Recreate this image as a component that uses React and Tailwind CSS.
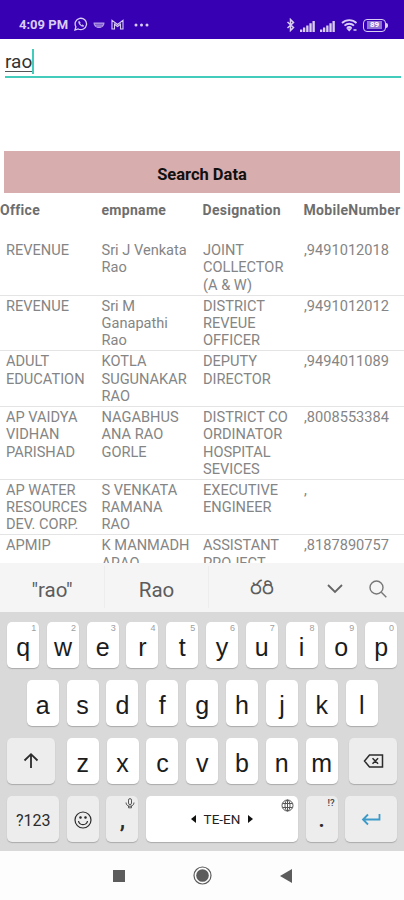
const columns = ['Office', 'empname', 'Designation', 'MobileNumber']

const records = [
  { office: 'REVENUE', name: 'Sri J Venkata\nRao', post: 'JOINT\nCOLLECTOR\n(A & W)', mobile: ',9491012018' },
  { office: 'REVENUE', name: 'Sri M\nGanapathi\nRao', post: 'DISTRICT\nREVEUE\nOFFICER', mobile: ',9491012012' },
  { office: 'ADULT\nEDUCATION', name: 'KOTLA\nSUGUNAKAR\nRAO', post: 'DEPUTY\nDIRECTOR', mobile: ',9494011089' },
  { office: 'AP VAIDYA\nVIDHAN\nPARISHAD', name: 'NAGABHUS\nANA RAO\nGORLE', post: 'DISTRICT CO\nORDINATOR\nHOSPITAL\nSEVICES', mobile: ',8008553384' },
  { office: 'AP WATER\nRESOURCES\nDEV. CORP.', name: 'S VENKATA\nRAMANA\nRAO', post: 'EXECUTIVE\nENGINEER', mobile: ',' },
  { office: 'APMIP', name: 'K MANMADH\nARAO', post: 'ASSISTANT\nPROJECT', mobile: ',8187890757' },
]

function StatusBar() {
  return (
    <header className="flex h-[38.5px] shrink-0 items-end bg-[#3700b3] pr-[16px] pb-[6px] pl-[19px] text-[#d9cdf4]">
      <span className="text-[13px] leading-[17px] font-bold">4:09 PM</span>
      <svg className="mb-[1.5px] ml-[6px]" width="14" height="14" viewBox="0 0 14 14" fill="none" stroke="currentColor">
        <path d="M1 13l.9-3.2A5.7 5.7 0 1 1 4.2 12z" strokeWidth="1.3" />
        <path d="M5 4.2c-.8 1 .2 2.8 1.2 3.8s2.8 1.8 3.7 1l-1.5-1.1-.9.5-1.7-1.7.5-.8z" fill="currentColor" strokeWidth=".7" />
      </svg>
      <svg className="mb-[3px] ml-[5px] opacity-75" width="12" height="9" viewBox="0 0 12 9" fill="currentColor">
        <path d="M.5 1.5h11c0 3-2 5.5-5.5 5.5S.5 4.5.5 1.5z" />
        <path d="M2 3.3h8M3 5h6" stroke="#3700b3" strokeWidth=".5" />
      </svg>
      <svg className="mb-[3px] ml-[6px]" width="13" height="11" viewBox="0 0 13 11" fill="none" stroke="currentColor" strokeWidth="1.1">
        <path d="M1 10V1.3l5.5 4.2L12 1.3V10H9.500V5.200l-3 2.300-3-2.300V10z" />
      </svg>
      <svg className="mb-[6px] ml-[10px]" width="15" height="4" viewBox="0 0 15 4" fill="currentColor">
        <circle cx="2" cy="2" r="1.5" />
        <circle cx="7.5" cy="2" r="1.5" />
        <circle cx="13" cy="2" r="1.5" />
      </svg>
      <div className="ml-auto flex items-end pb-[1px]">
        <svg width="9" height="14" viewBox="0 0 9 14" fill="none" stroke="currentColor" strokeWidth="1.5">
          <path d="M1.5 4l6 5.500L4.500 12.500v-11l3 3-6 5.500" />
        </svg>
        <Signal className="ml-[4px]" />
        <Signal className="ml-[3px]" />
        <svg className="ml-[5px]" width="17" height="14" viewBox="0 0 17 14" fill="none" stroke="currentColor" strokeWidth="1.8">
          <path d="M1 5a10.500 10.500 0 0 1 14.500 0M3.500 7.600a7 7 0 0 1 9.500 0M6 10a3.500 3.500 0 0 1 4.500 0" />
          <path d="M8.200 12.500l-1.500-1.500h3zM12.500 12h3" strokeWidth="1.3" />
        </svg>
        <div className="ml-[5px] flex h-[13px] w-[23px] items-center justify-center rounded-[4px] border-[1.5px] border-[#d9cdf4]">
          <span className="flex h-[8px] w-[15px] items-center justify-center bg-[#8f74d4] text-[8px] leading-none font-bold text-white">89</span>
        </div>
        <span className="mb-[4px] h-[5px] w-[2px] rounded-r bg-[#d9cdf4]" />
      </div>
    </header>
  )
}

function Signal({ className }) {
  return (
    <svg className={className} width="17" height="12" viewBox="0 0 17 12" fill="currentColor">
      <path d="M1 9.500h2.300V12H1zM4 7.500h2.300V12H4zM7.200 5.500h2.300V12H7.200zM10.400 3.200h2.300V12h-2.300zM13.500 1h2.300v11h-2.300z" />
    </svg>
  )
}

function Table() {
  return (
    <section className="flex min-h-0 flex-1 flex-col overflow-hidden text-[14.6px] leading-[17.3px] text-[#858585]">
      <div className="grid h-[47px] shrink-0 grid-cols-[101.5px_101px_101px_1fr] pt-[8.5px] text-[14px] font-bold tracking-[0.3px] text-[#6e6e6e]">
        {columns.map((column) => (
          <span key={column} className="whitespace-nowrap">{column}</span>
        ))}
      </div>
      {records.map((record) => (
        <div
          key={record.mobile}
          className="grid shrink-0 grid-cols-[95.5px_101.5px_101px_1fr] border-b border-[#e4e4e4] pt-[2.2px] pb-[0.5px] pl-[6px] whitespace-pre"
        >
          <span>{record.office}</span>
          <span>{record.name}</span>
          <span>{record.post}</span>
          <span>{record.mobile}</span>
        </div>
      ))}
    </section>
  )
}

function Suggestions() {
  return (
    <div className="flex h-[49.5px] shrink-0 items-center bg-[#f5f5f5] text-[20.5px] text-[#5c5c5c]">
      <span className="w-[105px] border-r border-[#ededed] pt-[9px] pb-[2px] text-center">"rao"</span>
      <span className="w-[104px] border-r border-[#ededed] pt-[9px] pb-[2px] text-center">Rao</span>
      <span className="w-[105px] text-center text-[20px]">రరి</span>
      <svg className="mt-[3px] ml-[12px]" width="18" height="12" viewBox="0 0 18 12" fill="none" stroke="#666" strokeWidth="1.8">
        <path d="M2 2l7 7 7-7" />
      </svg>
      <svg className="mt-[3px] ml-[24px]" width="20" height="20" viewBox="0 0 20 20" fill="none" stroke="#777" strokeWidth="1.4">
        <circle cx="8.5" cy="8.5" r="6.5" />
        <path d="M13.3 13.3l5 5" />
      </svg>
    </div>
  )
}

function Key({ label, hint }) {
  return (
    <div className="relative flex h-[46px] w-[32px] shrink-0 items-center justify-center rounded-[5px] bg-white pt-[6px] text-[25px] leading-none text-[#1c1c1c] shadow-[0_1px_1px_#aaa]">
      {label}
      {hint && <span className="absolute top-[2px] right-[3px] text-[9px] text-[#a0a0a0]">{hint}</span>}
    </div>
  )
}

function SoftKey({ children, className }) {
  return (
    <div className={`relative flex h-[46px] shrink-0 items-center justify-center rounded-[5px] bg-[#ededed] text-[#2b2b2b] shadow-[0_1px_1px_#aaa] ${className}`}>
      {children}
    </div>
  )
}

function Keyboard() {
  return (
    <div className="flex h-[239px] shrink-0 flex-col gap-[12.2px] bg-[#d9d9d9] pt-[9.5px] pr-[6.8px] pl-[7.2px] font-['Liberation_Sans',sans-serif]">
      <div className="flex justify-between">
        {'qwertyuiop'.split('').map((letter, index) => (
          <Key key={letter} label={letter} hint={String((index + 1) % 10)} />
        ))}
      </div>
      <div className="flex justify-between px-[19.5px]">
        {'asdfghjkl'.split('').map((letter) => (
          <Key key={letter} label={letter} />
        ))}
      </div>
      <div className="flex justify-between">
        <SoftKey className="w-[48px]">
          <svg width="16" height="18" viewBox="0 0 16 18" fill="none" stroke="currentColor" strokeWidth="1.8">
            <path d="M8 16V2.500M1.500 8.500L8 2.200l6.500 6.300" />
          </svg>
        </SoftKey>
        <div className="flex gap-[7.8px]">
          {'zxcvbnm'.split('').map((letter) => (
            <Key key={letter} label={letter} />
          ))}
        </div>
        <SoftKey className="w-[48px]">
          <svg width="21" height="16" viewBox="0 0 21 16" fill="none" stroke="currentColor" strokeWidth="1.5">
            <path d="M6.500 2H19.500v12H6.500L1.500 8zM9.500 5.200l5.600 5.600M15.100 5.200l-5.600 5.600" />
          </svg>
        </SoftKey>
      </div>
      <div className="flex justify-between font-[Roboto,sans-serif]">
        <SoftKey className="w-[52px] pt-[3px] text-[16px]">?123</SoftKey>
        <SoftKey className="w-[32px]">
          <svg className="mt-[1px]" width="18" height="18" viewBox="0 0 18 18" fill="none" stroke="currentColor" strokeWidth="1.2">
            <circle cx="9" cy="9" r="8" />
            <path d="M4.500 10c.7 4.800 8.300 4.800 9 0" />
            <circle cx="6.5" cy="6.5" r=".7" fill="currentColor" />
            <circle cx="11.5" cy="6.5" r=".7" fill="currentColor" />
          </svg>
        </SoftKey>
        <SoftKey className="w-[32px] pt-[2px] text-[24px] font-medium">
          ,
          <svg className="absolute top-[1.5px] right-[3px]" width="10" height="11" viewBox="0 0 10 11" fill="none" stroke="#555" strokeWidth="1">
            <rect x="3.5" y=".6" width="3" height="6" rx="1.5" />
            <path d="M1 4.500c0 5 8 5 8 0M3.500 7.800v2h3v-2" />
          </svg>
        </SoftKey>
        <div className="relative flex h-[46px] w-[152px] items-center justify-center gap-[8px] rounded-[5px] bg-white text-[13.5px] text-[#222] shadow-[0_1px_1px_#aaa]">
          <svg width="5" height="8" viewBox="0 0 5 8" fill="#111"><path d="M5 0v8L0 4z" /></svg>
          <span className="pt-[1px]">TE-EN</span>
          <svg width="5" height="8" viewBox="0 0 5 8" fill="#111"><path d="M0 0v8l5-4z" /></svg>
          <svg className="absolute top-[3px] right-[4px]" width="13" height="13" viewBox="0 0 13 13" fill="none" stroke="#555" strokeWidth="1">
            <circle cx="6.5" cy="6.5" r="5.5" />
            <ellipse cx="6.5" cy="6.5" rx="2.5" ry="5.5" />
            <path d="M1.500 4.500h10M1.500 8.500h10M6.500 1v11" />
          </svg>
        </div>
        <SoftKey className="w-[32px] text-[24px] font-medium">
          .
          <span className="absolute top-[1px] right-[3px] text-[9.5px] leading-[12px] text-[#444]">!?</span>
        </SoftKey>
        <SoftKey className="w-[52px]">
          <svg width="20" height="14" viewBox="0 0 20 14" fill="none" stroke="#3d9bc9" strokeWidth="1.8">
            <path d="M18.500 2v5.500H2M7 2.500L2 7.500 7 12.500" />
          </svg>
        </SoftKey>
      </div>
    </div>
  )
}

function NavBar() {
  return (
    <nav className="flex h-[49px] shrink-0 items-center justify-center gap-[68px] bg-[#fdfdfd] text-[#5c5c5c]">
      <span className="h-[12px] w-[12px] bg-[#5c5c5c]" />
      <svg width="19" height="19" viewBox="0 0 19 19" fill="none" stroke="currentColor">
        <circle cx="9.5" cy="9.5" r="8.5" strokeWidth="1.2" />
        <circle cx="9.5" cy="9.5" r="6.3" fill="currentColor" stroke="none" />
      </svg>
      <svg width="12" height="14" viewBox="0 0 12 14" fill="currentColor">
        <path d="M12 0v14L0 7z" />
      </svg>
    </nav>
  )
}

export default function App() {
  return (
    <main className="flex h-[900px] w-[404px] flex-col overflow-hidden bg-white font-[Roboto,sans-serif]">
      <StatusBar />
      <div className="mr-[3px] ml-[5px] flex h-[39.5px] shrink-0 items-start border-b-2 border-[#43cbbb] pt-[10px]">
        <span className="mt-[3px] border-b border-[#555] text-[19px] leading-[19px] text-[#333]">rao</span>
        <span className="h-[25px] w-[2px] bg-[#43cbbb]" />
      </div>
      <button className="mx-[4px] mt-[73px] h-[42px] shrink-0 bg-[#d8adad] pt-[7px] text-[16.5px] font-bold text-[#111]">Search Data</button>
      <Table />
      <Suggestions />
      <Keyboard />
      <NavBar />
    </main>
  )
}
